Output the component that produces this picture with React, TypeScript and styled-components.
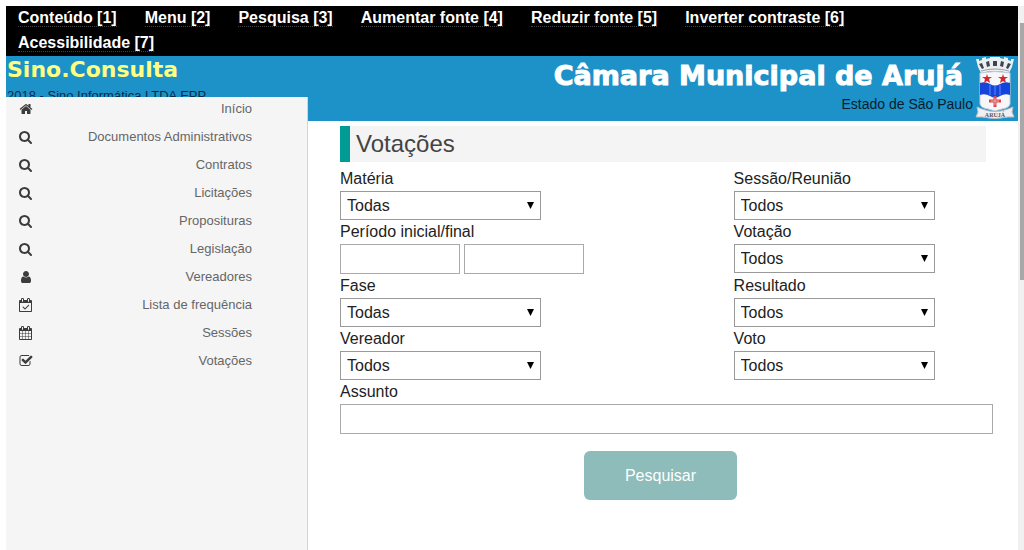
import React from "react";
import styled, { createGlobalStyle } from "styled-components";

const GlobalStyle = createGlobalStyle`
  *, *::before, *::after { box-sizing: border-box; }
  body {
    margin: 0;
    background: #fff;
    color: #222;
    font: 16px/24px "Liberation Sans", Arial, sans-serif;
  }
`;

const Page = styled.div`
  display: flex;
  min-height: 100vh;
  padding: 6px 0 0 6px;
`;

const Site = styled.div`
  flex: 1;
  min-width: 0;
  display: flex;
  flex-direction: column;
`;

const ScrollTrack = styled.div`
  width: 6px;
  padding: 17px 0 0 2px;
  background: #f1f1f1;
`;

const ScrollThumb = styled.div`
  height: 257px;
  background: #a8a8a8;
`;

const AccessBar = styled.nav`
  display: flex;
  flex-wrap: wrap;
  column-gap: 28px;
  padding: 0 12px;
  background: #000;
`;

const AccessItem = styled.span`
  height: 25px;
`;

const AccessLink = styled.a`
  color: #fff;
  font-weight: bold;
  text-decoration: none;
  border-bottom: 1px dotted #444;
`;

const Header = styled.header`
  display: flex;
  justify-content: space-between;
  height: 65px;
  background: #1c92c8;
`;

const Brand = styled.div`
  padding-left: 1px;
`;

const BrandName = styled.div`
  color: #ffff80;
  font: bold 22px/28px "DejaVu Sans", "Arial Black", sans-serif;
`;

const Copyright = styled.div`
  color: #0b2a48;
  font-size: 13px;
`;

const Council = styled.div`
  display: flex;
  padding-right: 3px;
`;

const CouncilText = styled.div`
  padding-right: 2px;
  text-align: right;
`;

const CouncilName = styled.div`
  padding: 4px 10px 0 0;
  color: #fff;
  font: bold 27px/32px "DejaVu Sans", "Arial Black", sans-serif;
  -webkit-text-stroke: 1px currentColor;
`;

const CouncilState = styled.div`
  color: #0b1c30;
  font-size: 14px;
`;

const Body = styled.div`
  flex: 1;
  display: flex;
`;

const Sidebar = styled.nav`
  position: relative;
  width: 302px;
  margin-top: -24px;
  background: #f5f5f5;
  border-right: 1px solid #d4d4d4;
`;

const MenuList = styled.ul`
  margin: 0;
  padding: 0 55px 0 13px;
  list-style: none;
`;

const MenuLink = styled.a`
  display: flex;
  align-items: center;
  justify-content: space-between;
  height: 28px;
  padding-bottom: 5px;
  color: #666;
  font-size: 13px;
  text-decoration: none;
`;

const MenuIcon = styled.svg`
  width: 14px;
  height: 14px;
  fill: #3c3c3c;
`;

const Main = styled.main`
  flex: 1;
  min-width: 0;
  padding: 5px 22px 24px 32px;
`;

const Title = styled.h1`
  margin: 0 10px 5px 0;
  padding-left: 6px;
  border-left: 10px solid #009b95;
  background: #f4f4f4;
  color: #444;
  font-size: 24px;
  font-weight: normal;
  line-height: 36px;
`;

const Fields = styled.form`
  display: grid;
  grid-template-columns: 3fr 2fr;
`;

const Field = styled.div<{ $wide?: boolean }>`
  grid-column: ${(p) => (p.$wide ? "1 / -1" : "auto")};
  padding-right: ${(p) => (p.$wide ? "3px" : "0")};
`;

const Label = styled.label`
  display: block;
  height: 24px;
  line-height: 24px;
`;

const SelectBox = styled.div`
  position: relative;
  width: 201px;
`;

const Select = styled.select`
  display: block;
  appearance: none;
  width: 100%;
  height: 29px;
  padding: 0 6px;
  border: 1px solid #999;
  border-radius: 0;
  background: #fff;
  color: #222;
  font: inherit;
`;

const Arrow = styled.svg`
  position: absolute;
  top: 10px;
  right: 7px;
  width: 7px;
  height: 8px;
  pointer-events: none;
`;

const Dates = styled.div`
  display: flex;
  gap: 4px;
`;

const TextInput = styled.input<{ $date?: boolean }>`
  display: block;
  width: ${(p) => (p.$date ? "120px" : "100%")};
  height: 30px;
  padding: 0 6px;
  border: 1px solid #aaa;
  font: inherit;
`;

const Actions = styled.div`
  grid-column: 1 / -1;
  display: flex;
  justify-content: center;
  padding: 17px 15px 0 0;
`;

const SearchButton = styled.button`
  height: 49px;
  padding: 0 41px;
  border: 0;
  border-radius: 6px;
  background: #8dbcba;
  color: #fff;
  font: inherit;
`;

const searchPath =
  "M1152 832q0-185-131.5-316.5t-316.5-131.5-316.5 131.5-131.5 316.5 131.5 316.5 316.5 131.5 316.5-131.5 131.5-316.5zm512 832q0 52-38 90t-90 38q-54 0-90-38l-343-342q-179 124-399 124-143 0-273.5-55.5t-225-150-150-225-55.5-273.5 55.5-273.5 150-225 225-150 273.5-55.5 273.5 55.5 225 150 150 225 55.5 273.5q0 220-124 399l343 343q37 37 37 90z";
const homePath =
  "M1472 992v480q0 26-19 45t-45 19h-384v-384h-256v384h-384q-26 0-45-19t-19-45v-480q0-1 .5-3t.5-3l575-474 575 474q1 2 1 6zm223-69l-62 74q-8 9-21 11h-3q-13 0-21-7l-692-577-692 577q-12 8-24 7-13-2-21-11l-62-74q-8-10-7-23.5t11-21.5l719-599q32-26 76-26t76 26l244 204v-195q0-14 9-23t23-9h192q14 0 23 9t9 23v408l219 182q10 8 11 21.5t-7 23.5z";
const userPath =
  "M1536 1399q0 109-62.5 187t-150.5 78h-854q-88 0-150.5-78t-62.5-187q0-85 8.5-160.5t31.5-152 58.5-131 94-89 134.5-34.5q131 128 313 128t313-128q76 0 134.5 34.5t94 89 58.5 131 31.5 152 8.5 160.5zm-256-887q0 159-112.5 271.5t-271.5 112.5-271.5-112.5-112.5-271.5 112.5-271.5 271.5-112.5 271.5 112.5 112.5 271.5z";
const calendarFrame =
  "m384-64v1280q0 52-38 90t-90 38h-1408q-52 0-90-38t-38-90v-1280q0-52 38-90t90-38h128v-96q0-66 47-113t113-47h64q66 0 113 47t47 113v96h384v-96q0-66 47-113t113-47h64q66 0 113 47t47 113v96h128q52 0 90 38t38 90z";
const calendarCheckPath =
  "M1303 964l-512 512q-10 9-23 9t-23-9l-288-288q-9-10-9-23t9-22l46-46q9-9 22-9t23 9l220 220 444-444q10-9 23-9t22 9l46 46q9 9 9 22t-9 23zm-1175 700h1408v-1024h-1408v1024zm384-1216v-288q0-14-9-23t-23-9h-64q-14 0-23 9t-9 23v288q0 14 9 23t23 9h64q14 0 23-9t9-23zm768 0v-288q0-14-9-23t-23-9h-64q-14 0-23 9t-9 23v288q0 14 9 23t23 9h64q14 0 23-9t9-23z" +
  calendarFrame;
const calendarPath =
  "M128 1664h288v-288h-288v288zm352 0h320v-288h-320v288zm-352-352h288v-320h-288v320zm352 0h320v-320h-320v320zm-352-384h288v-288h-288v288zm736 736h320v-288h-320v288zm-384-736h320v-288h-320v288zm768 736h288v-288h-288v288zm-384-352h320v-320h-320v320zm-352-864v-288q0-13-9.5-22.5t-22.5-9.5h-64q-13 0-22.5 9.5t-9.5 22.5v288q0 13 9.5 22.5t22.5 9.5h64q13 0 22.5-9.5t9.5-22.5zm736 864h288v-320h-288v320zm-384-384h320v-288h-320v288zm384 0h288v-288h-288v288zm32-480v-288q0-13-9.5-22.5t-22.5-9.5h-64q-13 0-22.5 9.5t-9.5 22.5v288q0 13 9.5 22.5t22.5 9.5h64q13 0 22.5-9.5t9.5-22.5z" +
  calendarFrame;
const checkSquarePath =
  "M1472 930v318q0 119-84.5 203.5t-203.5 84.5h-832q-119 0-203.5-84.5t-84.5-203.5v-832q0-119 84.5-203.5t203.5-84.5h832q63 0 117 25 15 7 18 23 3 17-9 29l-49 49q-10 10-23 10-3 0-9-2-23-6-45-6h-832q-66 0-113 47t-47 113v832q0 66 47 113t113 47h832q66 0 113-47t47-113v-254q0-13 9-22l64-64q10-10 23-10 6 0 12 3 20 8 20 29zm231-489l-814 814q-24 24-57 24t-57-24l-430-430q-24-24-24-57t24-57l110-110q24-24 57-24t57 24l263 263 647-647q24-24 57-24t57 24l110 110q24 24 24 57t-24 57z";

const accessLinks = [
  "Conteúdo [1]",
  "Menu [2]",
  "Pesquisa [3]",
  "Aumentar fonte [4]",
  "Reduzir fonte [5]",
  "Inverter contraste [6]",
  "Acessibilidade [7]",
];

const menu = [
  { label: "Início", icon: homePath },
  { label: "Documentos Administrativos", icon: searchPath },
  { label: "Contratos", icon: searchPath },
  { label: "Licitações", icon: searchPath },
  { label: "Proposituras", icon: searchPath },
  { label: "Legislação", icon: searchPath },
  { label: "Vereadores", icon: userPath },
  { label: "Lista de frequência", icon: calendarCheckPath },
  { label: "Sessões", icon: calendarPath },
  { label: "Votações", icon: checkSquarePath },
];

function Crest() {
  return (
    <svg width="40" height="65" viewBox="0 0 40 65" role="img" aria-label="Brasão de Arujá">
      <path
        d="M1 3l3 0 0 2 3-1 0-2 4-1 0 2 4-1 0-1h10v1l4 1 0-2 4 1 0 2 3 1 0-2 3 0-2 8-3 6q-14-4-28 0l-3-6z"
        fill="#eceef0"
      />
      <path d="M4 8l3-1 2 5-2 1zM11 6l3-1 1 5-3 1zM18 5h4v5h-4zM26 5l3 1-1 5-3-1zM33 7l3 1-3 5-2-1z" fill="#3d4650" />
      <path d="M6 15q14-4 28 0" fill="none" stroke="#9aa3aa" />
      <path d="M5 17q15-3 30 0v31q-1 4-8 5l-7 2-7-2q-7-1-8-5z" fill="#f7f6f8" stroke="#c3ccd6" />
      <path d="M5 27q5-2 10 1t10 0t10-1v12q-5-2-10 1t-10 0t-10-1z" fill="#1544dc" />
      <path d="M15 29v10M20 30v9M25 29v10" stroke="#5d8af5" />
      <path d="M12 18l1 3h4l-3 2 1 4-3-2-3 2 1-4-3-2h4zM28 18l1 3h4l-3 2 1 4-3-2-3 2 1-4-3-2h4z" fill="#d9262c" />
      <path d="M20 40v11M14 45h12" stroke="#d94a50" strokeWidth="3" />
      <path d="M20 42v7M16 45h8" stroke="#fbe3e4" strokeWidth="0.6" />
      <path d="M2 51l5 2q13 5 26 0l5-2-1 5 2 5-6 0q-13 3-26 0l-6 0 2-5z" fill="#f0f0f2" stroke="#b7bcc4" />
      <text x="20" y="61" textAnchor="middle" fontSize="6" fontWeight="bold" fontFamily="Liberation Serif, serif" fill="#555">
        ARUJÁ
      </text>
    </svg>
  );
}

function SelectField({ id, label, value }: { id: string; label: string; value: string }) {
  return (
    <Field>
      <Label htmlFor={id}>{label}</Label>
      <SelectBox>
        <Select id={id} defaultValue={value}>
          <option>{value}</option>
        </Select>
        <Arrow viewBox="0 0 7 8" aria-hidden="true">
          <path d="M0 1h7L3.500 8z" fill="#000" />
        </Arrow>
      </SelectBox>
    </Field>
  );
}

export default function App() {
  return (
    <Page>
      <GlobalStyle />
      <Site>
        <AccessBar aria-label="Acessibilidade">
          {accessLinks.map((text) => (
            <AccessItem key={text}>
              <AccessLink href="#">{text}</AccessLink>
            </AccessItem>
          ))}
        </AccessBar>
        <Header>
          <Brand>
            <BrandName>Sino.Consulta</BrandName>
            <Copyright>2018 - Sino Informática LTDA EPP</Copyright>
          </Brand>
          <Council>
            <CouncilText>
              <CouncilName>Câmara Municipal de Arujá</CouncilName>
              <CouncilState>Estado de São Paulo</CouncilState>
            </CouncilText>
            <Crest />
          </Council>
        </Header>
        <Body>
          <Sidebar aria-label="Menu">
            <MenuList>
              {menu.map((item) => (
                <li key={item.label}>
                  <MenuLink href="#">
                    <MenuIcon viewBox="0 0 1792 1792" aria-hidden="true">
                      <path d={item.icon} />
                    </MenuIcon>
                    {item.label}
                  </MenuLink>
                </li>
              ))}
            </MenuList>
          </Sidebar>
          <Main>
            <Title>Votações</Title>
            <Fields>
              <SelectField id="materia" label="Matéria" value="Todas" />
              <SelectField id="sessao" label="Sessão/Reunião" value="Todos" />
              <Field>
                <Label htmlFor="inicio">Período inicial/final</Label>
                <Dates>
                  <TextInput $date id="inicio" />
                  <TextInput $date aria-label="Período final" />
                </Dates>
              </Field>
              <SelectField id="votacao" label="Votação" value="Todos" />
              <SelectField id="fase" label="Fase" value="Todas" />
              <SelectField id="resultado" label="Resultado" value="Todos" />
              <SelectField id="vereador" label="Vereador" value="Todos" />
              <SelectField id="voto" label="Voto" value="Todos" />
              <Field $wide>
                <Label htmlFor="assunto">Assunto</Label>
                <TextInput id="assunto" />
              </Field>
              <Actions>
                <SearchButton type="button">Pesquisar</SearchButton>
              </Actions>
            </Fields>
          </Main>
        </Body>
      </Site>
      <ScrollTrack>
        <ScrollThumb />
      </ScrollTrack>
    </Page>
  );
}
